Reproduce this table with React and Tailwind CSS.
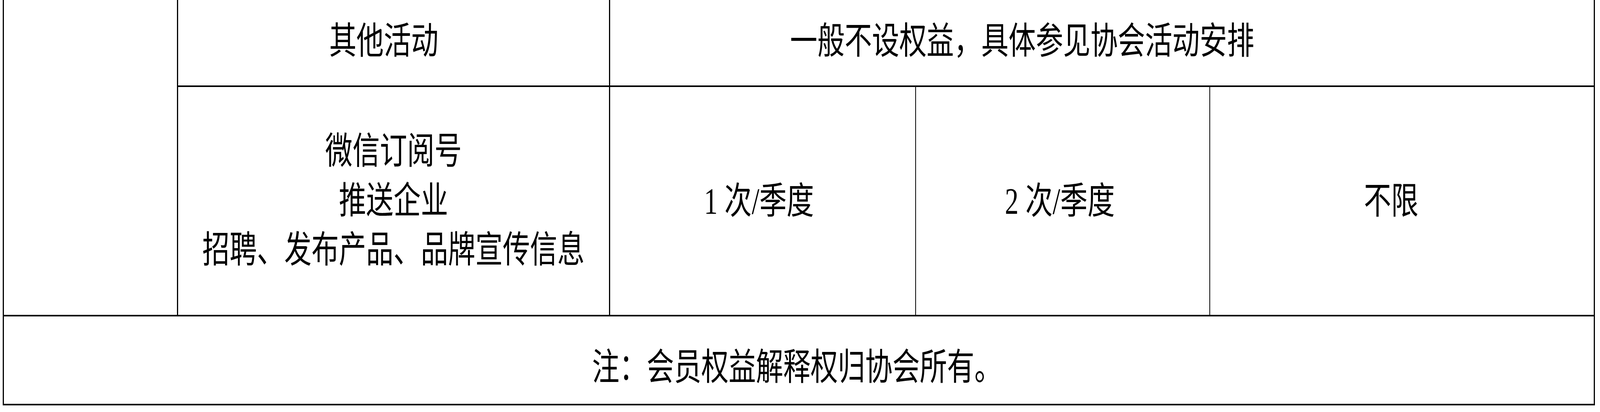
import React from 'react';

const font = { fontFamily: '"Liberation Serif", "Noto Sans CJK SC", serif' };

const Txt = ({ children }) => (
  <span className="inline-block scale-y-[1.37] leading-[92px]">{children}</span>
);

const App = () => {
  const quota = [
    { label: '1 次/季度', className: 'w-[21.62%] border-r-2 pr-[0.46vw]' },
    { label: '2 次/季度', className: 'w-[20.78%] border-r-2 pr-[0.36vw]' },
    { label: '不限', className: 'flex-1 pr-[1.35vw]' },
  ];

  return (
    <div className="w-full h-[1056px] bg-white overflow-hidden text-black" style={font}>
      <div className="ml-[0.18%] w-[99.5%] -mt-[13px] border-y-4 border-x-[3px] border-black text-[1.707vw] leading-[126px]">
        {/* upper block: empty left column spans both rows */}
        <div className="flex border-b-4 border-black">
          <div className="w-[10.95%] border-r-[3px] border-black"></div>
          <div className="flex-1 flex flex-col">
            <div className="flex h-[232px] border-b-4 border-black">
              <div className="w-[30.51%] border-r-[3px] border-black flex items-center justify-center pr-[1.21vw] pt-[2px] whitespace-nowrap">
                <Txt>其他活动</Txt>
              </div>
              <div className="flex-1 flex items-center justify-center pr-[9.96vw] pt-[2px] whitespace-nowrap">
                <Txt>一般不设权益，具体参见协会活动安排</Txt>
              </div>
            </div>
            <div className="flex h-[584px]">
              <div className="w-[30.51%] border-r-[3px] border-black flex items-center justify-center whitespace-nowrap">
                <div className="scale-y-[1.37] leading-[92px] text-center">
                  <div>微信订阅号</div>
                  <div>推送企业</div>
                  <div>招聘、发布产品、品牌宣传信息</div>
                </div>
              </div>
              {quota.map((q, i) => (
                <div
                  key={i}
                  className={`${q.className} border-black flex items-center justify-center pt-[2px] whitespace-nowrap`}
                >
                  <Txt>{q.label}</Txt>
                </div>
              ))}
            </div>
          </div>
        </div>
        {/* footnote row */}
        <div className="h-[224px] flex items-center justify-center pr-[0.25vw] pt-[38px] whitespace-nowrap">
          <Txt>注：会员权益解释权归协会所有。</Txt>
        </div>
      </div>
    </div>
  );
};

export default App;
